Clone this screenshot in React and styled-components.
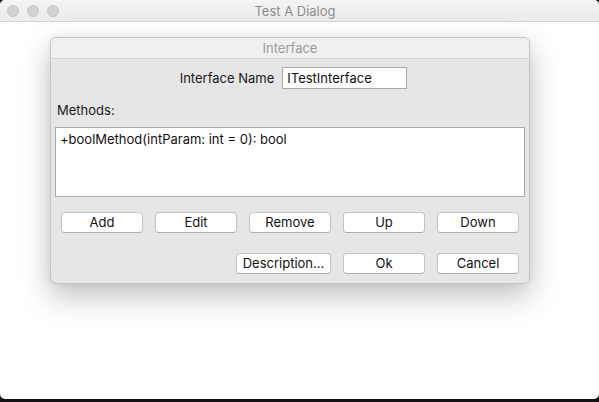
import React from 'react'
import styled, { createGlobalStyle } from 'styled-components'

const GlobalStyle = createGlobalStyle`
    html, body {
        margin: 0;
        padding: 0;
        background: #111;
        font-family: Inter, "Liberation Sans", Arial, sans-serif;
        font-size: 13px;
    }
`;

const Window = styled.div`
    width: 599px;
    height: 399px;
    background: #fff;
    border-radius: 5px;
    overflow: hidden;
    display: flex;
    flex-direction: column;
`;

const TitleBar = styled.div`
    height: 21px;
    flex: none;
    background: linear-gradient(#f4f4f4, #ececec);
    border-bottom: 1px solid #d3d3d3;
    display: flex;
    align-items: center;
`;

const Lights = styled.div`
    display: flex;
    gap: 8px;
    padding-left: 7px;
`;

const Light = styled.span`
    width: 12px;
    height: 12px;
    border-radius: 50%;
    background: #d2d2d2;
    box-sizing: border-box;
    border: 1px solid #c6c6c6;
`;

const WindowTitle = styled.div`
    flex: 1;
    text-align: center;
    color: #8c8c8c;
    font-size: 13px;
    margin-right: 68px;
`;

const Content = styled.div`
    flex: 1;
    padding: 15px 0 0 50px;
`;

const Sheet = styled.div`
    width: 480px;
    height: 247px;
    box-sizing: border-box;
    border: 1px solid #c4c4c4;
    border-radius: 6px;
    background: #e6e6e6;
    box-shadow: 0 12px 30px rgba(0, 0, 0, 0.25), 0 0 6px rgba(0, 0, 0, 0.06);
    display: flex;
    flex-direction: column;
    overflow: hidden;
`;

const SheetHeader = styled.div`
    height: 20px;
    flex: none;
    background: #f0f0f0;
    border-bottom: 1px solid #d2d2d2;
    color: #9a9a9a;
    text-align: center;
    line-height: 21px;
    font-size: 13px;
`;

const SheetBody = styled.div`
    display: flex;
    flex-direction: column;
    padding: 8px 4px 0 4px;
`;

const NameRow = styled.div`
    display: flex;
    align-items: center;
    justify-content: center;
    gap: 8px;
    padding-left: 7px;
    color: #1a1a1a;
`;

const TextField = styled.div`
    width: 125px;
    height: 22px;
    box-sizing: border-box;
    border: 1px solid #a9a9a9;
    background: #fff;
    padding: 0 4px;
    line-height: 20px;
    color: #111;
`;

const Label = styled.div`
    margin: 13px 0 0 2px;
    line-height: 16px;
    color: #1a1a1a;
`;

const ListBox = styled.div`
    margin-top: 9px;
    height: 70px;
    box-sizing: border-box;
    border: 1px solid #ababab;
    background: #fff;
    padding: 3px 4px;
    color: #111;
`;

const ButtonRow = styled.div`
    display: flex;
    gap: 12px;
    justify-content: ${props => props.end ? 'flex-end' : 'flex-start'};
    padding: 0 6px;
    margin-top: ${props => props.top}px;
`;

const Button = styled.div`
    width: ${props => props.wide ? 95 : 82}px;
    height: 21px;
    box-sizing: border-box;
    background: #fff;
    border: 1px solid #c2c2c2;
    border-bottom-color: #adadad;
    border-radius: 4px;
    text-align: center;
    line-height: 19px;
    color: #111;
`;

export default function App() {
    return (
        <>
            <GlobalStyle />
            <Window>
                <TitleBar>
                    <Lights>
                        <Light />
                        <Light />
                        <Light />
                    </Lights>
                    <WindowTitle>Test A Dialog</WindowTitle>
                </TitleBar>
                <Content>
                    <Sheet>
                        <SheetHeader>Interface</SheetHeader>
                        <SheetBody>
                            <NameRow>
                                <span>Interface Name</span>
                                <TextField>ITestInterface</TextField>
                            </NameRow>
                            <Label>Methods:</Label>
                            <ListBox>+boolMethod(intParam: int = 0): bool</ListBox>
                            <ButtonRow top={15}>
                                <Button>Add</Button>
                                <Button>Edit</Button>
                                <Button>Remove</Button>
                                <Button>Up</Button>
                                <Button>Down</Button>
                            </ButtonRow>
                            <ButtonRow end top={20}>
                                <Button wide>Description...</Button>
                                <Button>Ok</Button>
                                <Button>Cancel</Button>
                            </ButtonRow>
                        </SheetBody>
                    </Sheet>
                </Content>
            </Window>
        </>
    );
}
